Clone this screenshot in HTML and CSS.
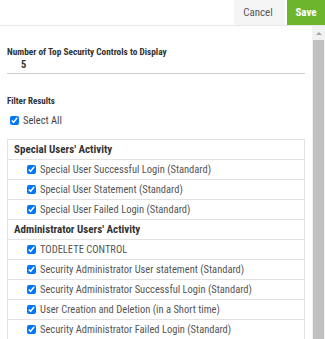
FILE: index.html
```html
<!DOCTYPE html>
<html lang="en">
<head>
    <meta charset="UTF-8">
    <title>Top Security Controls</title>
    <link rel="stylesheet" href="styles.css">
</head>
<body>
    <div class="toolbar">
        <button class="btn btn-cancel">Cancel</button>
        <button class="btn btn-save">Save</button>
    </div>
    <div class="panel">
        <div class="content">
            <div class="field">
                <label class="field-label">Number of Top Security Controls to Display</label>
                <div class="field-value">5</div>
            </div>

            <div class="filter-title">Filter Results</div>
            <label class="select-all">
                <input type="checkbox" checked>
                <span>Select All</span>
            </label>

            <div class="group-list">
                <div class="group-head">Special Users' Activity</div>
                <label class="item"><input type="checkbox" checked><span>Special User Successful Login (Standard)</span></label>
                <label class="item"><input type="checkbox" checked><span>Special User Statement (Standard)</span></label>
                <label class="item"><input type="checkbox" checked><span>Special User Failed Login (Standard)</span></label>

                <div class="group-head">Administrator Users' Activity</div>
                <label class="item"><input type="checkbox" checked><span>TODELETE CONTROL</span></label>
                <label class="item"><input type="checkbox" checked><span>Security Administrator User statement (Standard)</span></label>
                <label class="item"><input type="checkbox" checked><span>Security Administrator Successful Login (Standard)</span></label>
                <label class="item"><input type="checkbox" checked><span>User Creation and Deletion (in a Short time)</span></label>
                <label class="item"><input type="checkbox" checked><span>Security Administrator Failed Login (Standard)</span></label>
            </div>
        </div>
        <div class="scrollbar">
            <div class="scroll-up"></div>
            <div class="scroll-thumb"></div>
        </div>
    </div>
</body>
</html>
```

FILE: styles.css
```css
body {
    margin: 0;
    font-family: "Roboto Condensed", Roboto, sans-serif;
    background: #fff;
    color: #333;
    height: 339px;
    overflow: hidden;
}
.toolbar {
    display: flex;
    justify-content: flex-end;
    height: 25px;
    border-bottom: 1px solid #e8e8e8;
}
.btn {
    border: none;
    margin: 0;
    padding: 0;
    font-family: "Roboto Condensed", Roboto, sans-serif;
    font-size: 11px;
    cursor: pointer;
}
.btn-cancel {
    width: 51px;
    padding-right: 3px;
    background: #f5f5f5;
    color: #555;
    margin-right: 2px;
}
.btn-save {
    width: 38px;
    background: #6cb52d;
    color: #fff;
    font-weight: bold;
}
.panel {
    display: flex;
    height: 313px;
}
.content {
    flex: 1;
    padding: 0 7px;
    overflow: hidden;
}
.field {
    padding-top: 20px;
}
.field-label {
    display: block;
    font-size: 9.3px;
    font-weight: bold;
    line-height: 11px;
}
.field-value {
    font-size: 10.5px;
    font-weight: bold;
    padding: 2px 0 3px 14px;
    border-bottom: 1px solid #ccc;
    line-height: 11px;
}
.filter-title {
    margin-top: 22px;
    font-size: 9px;
    font-weight: bold;
    line-height: 11px;
}
.select-all {
    display: flex;
    align-items: center;
    margin: 8px 0 0 3px;
    font-size: 10.5px;
    color: #444;
    height: 11px;
}
input[type="checkbox"] {
    width: 9px;
    height: 9px;
    margin: 0 4px 0 0;
}
.group-list {
    margin-top: 13px;
    border: 1px solid #e2e2e2;
}
.group-head {
    height: 19px;
    line-height: 19px;
    padding-left: 6px;
    font-size: 11px;
    font-weight: bold;
    color: #333;
    border-bottom: 1px solid #e2e2e2;
}
.item {
    display: flex;
    align-items: center;
    height: 19px;
    padding-left: 19px;
    font-size: 10.5px;
    color: #555;
    border-bottom: 1px solid #e2e2e2;
}
.scrollbar {
    width: 13px;
    background: #f1f1f1;
    display: flex;
    flex-direction: column;
    align-items: center;
}
.scroll-up {
    margin-top: 6px;
    width: 0;
    height: 0;
    border-left: 3px solid transparent;
    border-right: 3px solid transparent;
    border-bottom: 3px solid #a3a3a3;
}
.scroll-thumb {
    margin-top: 5px;
    width: 11px;
    flex: 1;
    background: #c1c1c1;
}
```
